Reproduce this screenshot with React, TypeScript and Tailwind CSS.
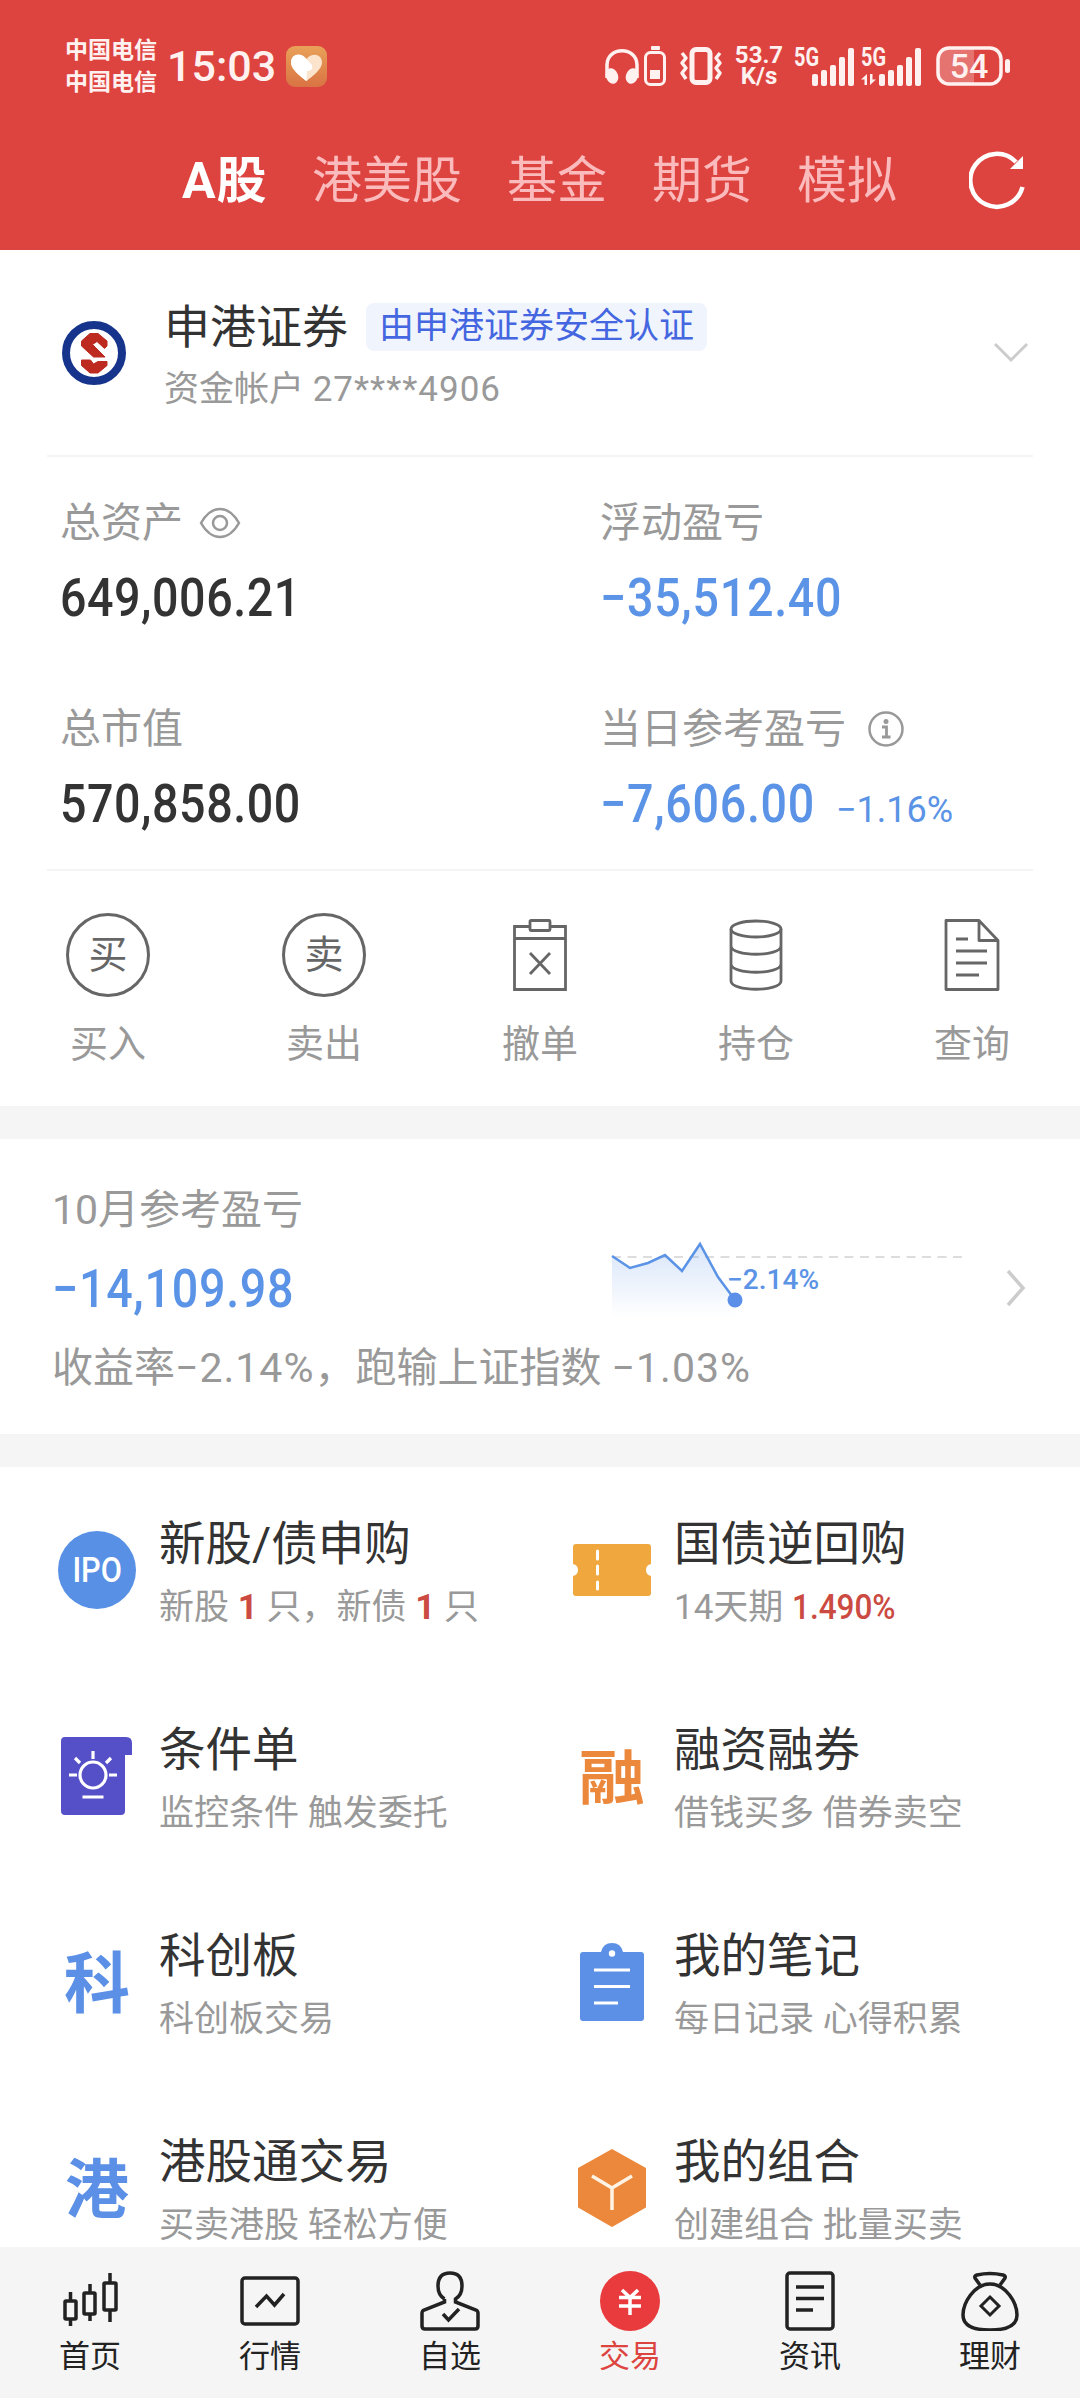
import React from "react";

const tabs = ["港美股", "基金", "期货", "模拟"];

function Signal({ data }: { data?: boolean }) {
  return (
    <svg width="62" height="56" viewBox="0 -8 62 56" fill="#fff1f0">
      <text x="0" y="20" fontSize="25" fontWeight="700" textLength="25" lengthAdjust="spacingAndGlyphs">
        5G
      </text>
      <rect x="18" y="28" width="6" height="12" rx="2" />
      <rect x="27" y="24" width="6" height="16" rx="2" />
      <rect x="36" y="19" width="6" height="21" rx="2" />
      <rect x="45" y="11" width="6" height="29" rx="2" />
      <rect x="54" y="2" width="6" height="38" rx="2" />
      {data && <path d="M6 28v11H3.500v-5.500H0zM9 28v11l6-5.500h-3.500v-5.500z" />}
    </svg>
  );
}

function StatusBar() {
  return (
    <div className="flex h-[132px] items-center pl-[65px] pr-[69px] text-[#fff1f0]">
      <div className="pt-px text-[23px] font-bold leading-8">
        <div>中国电信</div>
        <div>中国电信</div>
      </div>
      <span className="ml-[10px] w-[108px] whitespace-nowrap text-[43px] font-medium leading-none">15:03</span>
      <svg className="ml-[11px]" width="41" height="41" viewBox="0 0 41 41">
        <defs>
          <linearGradient id="app" x1="0" y1="0" x2="0" y2="1">
            <stop offset="0" stopColor="#e9a159" />
            <stop offset="1" stopColor="#d97343" />
          </linearGradient>
        </defs>
        <rect width="41" height="41" rx="9" fill="url(#app)" />
        <path d="M20.500 35C17 32 5 24 5 16.500 5 8 15 6 20.500 13 26 6 36 8 36 16.500 36 24 24 32 20.500 35z" fill="#fbe3cc" />
        <path d="M20.500 35C17 32 5 24 5 16.500 5 8 14 6 19.500 12L26 19c1 4-1 6-5 6z" fill="#fff" />
      </svg>
      <div className="ml-auto flex items-center">
        <svg width="34" height="38" viewBox="0 0 34 38">
          <path d="M2 30V17C2 -2 32 -2 32 17V30" transform="translate(0 1)" fill="none" stroke="#fff1f0" strokeWidth="3.500" />
          <ellipse cx="7" cy="29" rx="6" ry="8" transform="rotate(-20 7 29)" fill="#fff1f0" />
          <ellipse cx="27" cy="29" rx="6" ry="8" transform="rotate(20 27 29)" fill="#fff1f0" />
        </svg>
        <svg className="ml-[5px]" width="22" height="40" viewBox="0 0 22 40" fill="#fff1f0">
          <rect x="7" y="0" width="9" height="4" rx="1" />
          <rect x="1.500" y="6.500" width="19" height="32" rx="5" fill="none" stroke="#fff1f0" strokeWidth="3" />
          <rect x="6" y="24" width="10" height="9" />
        </svg>
        <svg className="ml-[13px]" width="44" height="40" viewBox="0 0 44 40" fill="none" stroke="#fff1f0">
          <rect x="13" y="3.500" width="18" height="33" rx="4" strokeWidth="5" />
          <path d="M3 7l4 5-4 5 4 5-4 5 4 6M41 7l-4 5 4 5-4 5 4 5-4 6" strokeWidth="3.500" strokeLinejoin="round" />
        </svg>
        <div className="ml-[10px] w-[52px] text-center text-[24px] font-bold leading-[21px]">
          <div>53.7</div>
          <div>K/s</div>
        </div>
        <span className="ml-[9px]">
          <Signal />
        </span>
        <span className="ml-[5px]">
          <Signal data />
        </span>
        <svg className="ml-[13px]" width="75" height="40" viewBox="0 0 75 40">
          <path d="M12 3H38V37H12Q3 37 3 28V12Q3 3 12 3" fill="#fff" fillOpacity=".25" />
          <rect x="2" y="2" width="63" height="36" rx="11" fill="none" stroke="#fff1f0" strokeWidth="3.500" />
          <rect x="69" y="13" width="5" height="14" rx="2.500" fill="#fff1f0" />
          <text x="33" y="32" textAnchor="middle" fontSize="34" fontWeight="500" fill="#fff1f0">
            54
          </text>
        </svg>
      </div>
    </div>
  );
}

function Header() {
  return (
    <header className="h-[250px] bg-[#dd4440]">
      <StatusBar />
      <nav className="flex h-[97px] items-center gap-[45px] pl-[182px] pr-[55px] text-[50px] leading-none text-[#fbbabb]">
        <span className="w-[85px] whitespace-nowrap font-bold tracking-[1px] text-white">A股</span>
        {tabs.map((tab) => (
          <span key={tab}>{tab}</span>
        ))}
        <svg className="mb-0.5 ml-auto" width="56" height="60" viewBox="0 0 56 60" fill="none">
          <path d="M53.500 37A26.500 26.500 0 1 1 47 12" stroke="#fff" strokeWidth="4.500" />
          <path d="M54 6v13H41z" fill="#fff" />
        </svg>
      </nav>
    </header>
  );
}

function Broker() {
  return (
    <div className="mx-[47px] flex h-[207px] items-center border-b-2 border-[#f4f4f4] pl-[15px] pr-1">
      <svg width="64" height="64" viewBox="0 0 64 64">
        <circle cx="32" cy="32" r="28" fill="#fff" stroke="#16348c" strokeWidth="8" />
        <g fill="#bd2a20" stroke="#bd2a20" strokeLinejoin="round">
          <path d="M28 12.500H36L45 20V25L42.500 27.500L35 20.500L30.500 23.500L43 36H31.500L19.500 25V20z" />
          <path d="M19.500 39H28.500L31.500 43L36 40.500H45V44.500L36 52H28L19.500 44.500z" />
        </g>
      </svg>
      <div className="ml-[38px] pt-[10px]">
        <div className="flex items-center">
          <span className="text-[46px] leading-[50px] text-[#333]">申港证券</span>
          <span className="ml-[18px] flex h-12 items-center rounded-lg bg-[#f0f4fd] px-[13px] text-[35px] leading-none text-[#4466e0]">
            由申港证券安全认证
          </span>
        </div>
        <div className="mt-[14px] text-[35px] leading-[48px] text-[#999]">
          资金帐户 <span className="tracking-[1px]">27****4906</span>
        </div>
      </div>
      <svg className="ml-auto" width="36" height="22" viewBox="0 0 36 22" fill="none" stroke="#ccc" strokeWidth="3">
        <path d="M2 2l16 16L34 2" />
      </svg>
    </div>
  );
}

function Amount({ children, blue }: { children: React.ReactNode; blue?: boolean }) {
  return (
    <div
      className={
        blue
          ? "origin-left scale-x-[.88] whitespace-nowrap text-[53px] font-medium leading-[60px] tracking-[.8px] text-[#5b93e6]"
          : "origin-left scale-x-[.88] whitespace-nowrap text-[53px] font-medium leading-[60px] tracking-[.6px] text-[#333]"
      }
    >
      {children}
    </div>
  );
}

function Assets() {
  return (
    <div className="mx-[47px] grid h-[414px] grid-cols-[540px_1fr] grid-rows-[206px_206px] border-b-2 border-[#f4f4f4] pl-[13px] text-[41px] text-[#999]">
      <div className="pt-[41px]">
        <div className="flex items-center leading-[50px]">
          总资产
          <svg className="ml-4" width="42" height="32" viewBox="0 0 42 32" fill="none" stroke="#999" strokeWidth="2.500">
            <path d="M2 16Q10 2 21 2T40 16Q32 30 21 30T2 16z" />
            <circle cx="21" cy="16" r="7" />
          </svg>
        </div>
        <div className="mt-5">
          <Amount>649,006.21</Amount>
        </div>
      </div>
      <div className="pt-[41px]">
        <div className="leading-[50px]">浮动盈亏</div>
        <div className="mt-5">
          <Amount blue>−35,512.40</Amount>
        </div>
      </div>
      <div className="pt-[41px]">
        <div className="leading-[50px]">总市值</div>
        <div className="mt-5">
          <Amount>570,858.00</Amount>
        </div>
      </div>
      <div className="pt-[41px]">
        <div className="flex items-center leading-[50px]">
          当日参考盈亏
          <svg className="ml-[22px]" width="36" height="36" viewBox="0 0 36 36" fill="none" stroke="#999" strokeWidth="2.500">
            <circle cx="18" cy="18" r="16.500" />
            <circle cx="18" cy="10.500" r="2.500" fill="#999" stroke="none" />
            <path d="M14 16h4.500v10M14 26h8.500" strokeWidth="2.800" />
          </svg>
        </div>
        <div className="mt-5 flex items-baseline">
          <div className="w-[236px]">
            <Amount blue>−7,606.00</Amount>
          </div>
          <span className="whitespace-nowrap text-[36px] leading-none text-[#5b93e6]">−1.16%</span>
        </div>
      </div>
    </div>
  );
}

function RoundIcon({ char }: { char: string }) {
  return (
    <span className="flex h-[84px] w-[84px] items-center justify-center rounded-full border-[3px] border-[#666] text-[39px] leading-none text-[#666]">
      {char}
    </span>
  );
}

const actions = [
  { label: "买入", icon: <RoundIcon char="买" /> },
  { label: "卖出", icon: <RoundIcon char="卖" /> },
  {
    label: "撤单",
    icon: (
      <svg width="54" height="72" viewBox="0 0 54 72" fill="none" stroke="#666" strokeWidth="2.800">
        <path d="M17 7.500H1.500V70.500H52.500V7.500H37M1.500 19.500H52.500" />
        <rect x="17" y="1.500" width="20" height="10" rx="1" />
        <path d="M17 34L37 55M37 34L17 55" />
      </svg>
    ),
  },
  {
    label: "持仓",
    icon: (
      <svg width="54" height="72" viewBox="0 0 54 72" fill="none" stroke="#666" strokeWidth="2.800">
        <ellipse cx="27" cy="10" rx="25" ry="8" />
        <path d="M2 10V62C2 73 52 73 52 62V10M2 27C2 38 52 38 52 27M2 45C2 56 52 56 52 45" />
      </svg>
    ),
  },
  {
    label: "查询",
    icon: (
      <svg width="56" height="72" viewBox="0 0 56 72" fill="none" stroke="#666" strokeWidth="2.800">
        <path d="M35 1.500H2V70.500H54V21.500L35 1.500V21.500H54M12 20H24M12 32H43M12 44H43M12 56H35" strokeLinejoin="round" />
      </svg>
    ),
  },
];

function Actions() {
  return (
    <div className="grid h-[235px] grid-cols-5 pt-[41px]">
      {actions.map((item) => (
        <div key={item.label} className="flex flex-col items-center">
          <div className="flex h-[86px] items-center">{item.icon}</div>
          <span className="mt-[22px] text-[38px] leading-[48px] text-[#999]">{item.label}</span>
        </div>
      ))}
    </div>
  );
}

function MonthCard() {
  return (
    <section className="flex h-[295px] items-start pl-[52px] pr-[54px] pt-[46px] text-[41px] text-[#999]">
      <div className="w-[559px] shrink-0">
        <div className="leading-[50px]">10月参考盈亏</div>
        <div className="mt-[24px]">
          <Amount blue>−14,109.98</Amount>
        </div>
        <div className="mt-[24px] whitespace-nowrap leading-[50px]">
          收益率<span className="tracking-[1px]">−2.14%</span>，跑输上证指数 <span className="tracking-[1px]">−1.03%</span>
        </div>
      </div>
      <svg className="mt-[54px]" width="356" height="84" viewBox="0 0 356 84" fill="none">
        <defs>
          <linearGradient id="fade" x1="0" y1="0" x2="0" y2="1">
            <stop offset="0" stopColor="#5b93e6" stopOpacity=".24" />
            <stop offset="1" stopColor="#5b93e6" stopOpacity="0" />
          </linearGradient>
        </defs>
        <path d="M1 18H354" stroke="#ddd" strokeWidth="2" strokeDasharray="9 6.500" />
        <path d="M1 17L19 29L37 24L54 16L71 32L89 5L107 38L124 61V78H1z" fill="url(#fade)" />
        <path d="M1 17L19 29L37 24L54 16L71 32L89 5L107 38L124 61" stroke="#5b93e6" strokeWidth="2.500" />
        <circle cx="124" cy="61" r="7.500" fill="#5b8fe8" />
        <text x="116" y="50" fontSize="28" fontWeight="500" fill="#5b93e6" textLength="92">
          −2.14%
        </text>
      </svg>
      <svg className="ml-auto mt-[84px]" width="20" height="38" viewBox="0 0 20 38" fill="none" stroke="#ccc" strokeWidth="3.500">
        <path d="M2 2l15 17L2 36" />
      </svg>
    </section>
  );
}

const red = "font-bold text-[#cb4a41]";

const features = [
  {
    title: "新股/债申购",
    desc: (
      <>
        新股 <span className={red}>1</span> 只，新债 <span className={red}>1</span> 只
      </>
    ),
    icon: (
      <span className="flex h-[78px] w-[78px] items-center justify-center rounded-full bg-[#5790e5] text-[35px] font-medium leading-none text-white">
        <span className="scale-x-[.88]">IPO</span>
      </span>
    ),
  },
  {
    title: "国债逆回购",
    desc: (
      <>
        14天期 <span className="inline-block origin-left scale-x-90 font-medium text-[#cb4a41]">1.490%</span>
      </>
    ),
    icon: (
      <svg width="78" height="52" viewBox="0 0 78 52">
        <path d="M3 0H75Q78 0 78 3V20Q73 21 73 26T78 32V49Q78 52 75 52H3Q0 52 0 49V32Q5 31 5 26T0 20V3Q0 0 3 0z" fill="#efa73e" />
        <path d="M24.500 7V15M24.500 22V30M24.500 38V45" stroke="#fff" strokeWidth="3" strokeLinecap="round" />
      </svg>
    ),
  },
  {
    title: "条件单",
    desc: "监控条件 触发委托",
    icon: (
      <svg width="72" height="78" viewBox="0 0 72 78" fill="none" stroke="#fff" strokeWidth="3.200">
        <path d="M4 0H65Q71 0 71 6V18H64V74Q64 78 60 78H4Q0 78 0 74V4Q0 0 4 0z" fill="#5650c8" stroke="none" />
        <circle cx="32" cy="38" r="13" />
        <path d="M32 14V22M8 38H16M48 38H56M14 21L19 26M50 21L45 26M21.500 60H42.500" />
      </svg>
    ),
  },
  {
    title: "融资融券",
    desc: "借钱买多 借券卖空",
    icon: <span className="mt-[5px] scale-y-90 text-[66px] font-bold leading-none text-[#ec883b]">融</span>,
  },
  {
    title: "科创板",
    desc: "科创板交易",
    icon: <span className="mt-[5px] text-[66px] font-bold leading-none text-[#5b90e6]">科</span>,
  },
  {
    title: "我的笔记",
    desc: "每日记录 心得积累",
    icon: (
      <svg width="64" height="78" viewBox="0 0 64 78">
        <path d="M3 9H21Q23 0 32 0T43 9H61Q64 9 64 12V75Q64 78 61 78H3Q0 78 0 75V12Q0 9 3 9z" fill="#5b90e6" />
        <circle cx="32" cy="10.500" r="3.200" fill="#fff" />
        <path d="M14 27H50M14 43.500H50M14 60H38" stroke="#fff" strokeWidth="3.200" />
      </svg>
    ),
  },
  {
    title: "港股通交易",
    desc: "买卖港股 轻松方便",
    icon: <span className="mt-[5px] text-[64px] font-bold leading-none text-[#5b90e6]">港</span>,
  },
  {
    title: "我的组合",
    desc: "创建组合 批量买卖",
    icon: (
      <svg width="70" height="78" viewBox="0 0 70 78">
        <path d="M35 1L68 19.500V58L35 77L2 58V19.500z" fill="#ec883b" stroke="#ec883b" strokeWidth="2" strokeLinejoin="round" />
        <path d="M15 27L35 39L55 27M35 39V61" fill="none" stroke="#fff3e6" strokeWidth="3.500" />
      </svg>
    ),
  },
];

function Features() {
  return (
    <section className="grid h-[780px] auto-rows-[206px] grid-cols-[515px_1fr] overflow-hidden pl-[57px] pt-[47px]">
      {features.map((item) => (
        <div key={item.title} className="flex items-start whitespace-nowrap">
          <div className="mt-[14px] flex h-[84px] w-20 items-center justify-center">{item.icon}</div>
          <div className="ml-[22px]">
            <div className="text-[46.500px] leading-[60px] text-[#333]">{item.title}</div>
            <div className="mt-[10px] text-[35px] leading-[48px] text-[#999]">{item.desc}</div>
          </div>
        </div>
      ))}
    </section>
  );
}

const navItems = [
  {
    label: "首页",
    icon: (
      <svg width="56" height="56" viewBox="0 0 56 56" fill="none" stroke="#222" strokeWidth="3.500">
        <rect x="3" y="28" width="11" height="18" rx="1" />
        <rect x="22" y="20" width="11" height="21" rx="1" />
        <rect x="42" y="10" width="12" height="27" rx="1" />
        <path d="M8.500 19V28M8.500 46V53M28 11V20M28 41V48M48 0V10M48 37V49" />
      </svg>
    ),
  },
  {
    label: "行情",
    icon: (
      <svg width="60" height="50" viewBox="0 0 60 50" fill="none" stroke="#222" strokeWidth="3.500">
        <rect x="2" y="2" width="56" height="46" rx="3" />
        <path d="M16 31L26.500 20L34.500 29L44 18" />
      </svg>
    ),
  },
  {
    label: "自选",
    icon: (
      <svg width="60" height="60" viewBox="0 0 60 60" fill="none" stroke="#222" strokeWidth="3.500">
        <path d="M24.500 28V31L4 39Q2 40 2 42V55Q2 58 5 58H55Q58 58 58 55V42Q58 40 56 39L35.500 31V28Q42 24 42 15Q42 2 30 2T18 15Q18 24 24.500 28" />
        <path d="M23 43L28.500 49L39 38" />
      </svg>
    ),
  },
  {
    label: "交易",
    active: true,
    icon: (
      <svg width="60" height="60" viewBox="0 0 60 60" fill="none" stroke="#fff" strokeWidth="3.500">
        <circle cx="30" cy="30" r="30" fill="#e93b3d" stroke="none" />
        <path d="M22 19L30 26.500L38 19M19 26.500H41M19 35H41M30 26.500V44" />
      </svg>
    ),
  },
  {
    label: "资讯",
    icon: (
      <svg width="50" height="60" viewBox="0 0 50 60" fill="none" stroke="#222" strokeWidth="3.500">
        <rect x="2" y="2" width="46" height="56" rx="3" />
        <path d="M11 16H39M11 27.500H39M11 39H28" />
      </svg>
    ),
  },
  {
    label: "理财",
    icon: (
      <svg width="58" height="60" viewBox="0 0 58 60" fill="none" stroke="#222" strokeWidth="3.500">
        <path d="M19 14L14 7Q13 5 16 4Q29 1 42 4Q45 5 44 7L39 14" />
        <path d="M29 13C13 13 2 32 2 44Q2 59 29 59T56 44C56 32 45 13 29 13z" />
        <path d="M29 26L38 35L29 44L20 35z" strokeWidth="3" />
      </svg>
    ),
  },
];

function BottomNav() {
  return (
    <nav className="grid h-[151px] grid-cols-6 bg-[#f5f5f5] pt-[23px]">
      {navItems.map((item) => (
        <div key={item.label} className="flex flex-col items-center">
          <div className="flex h-[61px] items-center">{item.icon}</div>
          <span className={item.active ? "mt-1.5 text-[31px] leading-10 text-[#dd4440]" : "mt-1.5 text-[31px] leading-10 text-[#222]"}>
            {item.label}
          </span>
        </div>
      ))}
    </nav>
  );
}

export default function App() {
  return (
    <div
      lang="zh-CN"
      className="flex h-[2398px] w-[1080px] flex-col overflow-hidden bg-white font-[Roboto,'Noto_Sans_CJK_SC',sans-serif]"
    >
      <Header />
      <section>
        <Broker />
        <Assets />
        <Actions />
      </section>
      <div className="h-[33px] shrink-0 bg-[#f5f5f5]" />
      <MonthCard />
      <div className="h-[33px] shrink-0 bg-[#f5f5f5]" />
      <Features />
      <BottomNav />
    </div>
  );
}
